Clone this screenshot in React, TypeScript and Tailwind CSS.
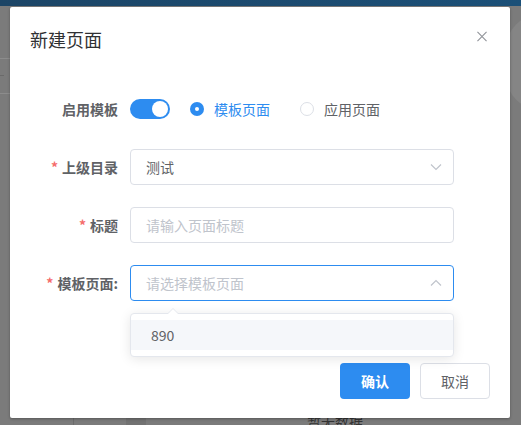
import React from "react";

const BLUE = "#2d8cf0";

function Chevron({ up }: { up?: boolean }) {
  return (
    <svg width="14" height="14" viewBox="0 0 14 14" fill="none">
      <polyline
        points={up ? "2,9.5 7,4.5 12,9.5" : "2,4.5 7,9.5 12,4.5"}
        stroke="#c0c4cc"
        strokeWidth="1.2"
        fill="none"
      />
    </svg>
  );
}

function Label({ text, required }: { text: string; required?: boolean }) {
  return (
    <div className="w-[100px] shrink-0 pr-3 text-right text-[14px] font-semibold text-[#606266]">
      {required && <span className="mr-1 text-[#f56c6c]">*</span>}
      {text}
    </div>
  );
}

export default function App() {
  return (
    <div
      className="relative h-[425px] w-[521px] overflow-hidden bg-[#7b7b7b]"
      style={{ fontFamily: '"Noto Sans CJK SC", "Noto Sans", sans-serif' }}
    >
      {/* page behind the mask */}
      <div className="h-[6px] w-full bg-gradient-to-r from-[#1c4566] to-[#1b5078]" />
      <div className="absolute left-0 top-[58px] h-px w-[10px] bg-[#8c8c8c]" />
      <div className="absolute left-0 top-[75px] h-px w-[4px] bg-[#6a6a6a]" />
      <div className="absolute left-0 top-[93px] h-px w-[10px] bg-[#8c8c8c]" />
      <div className="absolute left-[506px] top-[14px] h-[96px] w-[70px] rounded-full bg-[#858585]" />
      <div className="absolute left-[73px] top-[410px] h-[20px] w-px bg-[#6c6c6c]" />
      <div className="absolute left-[126px] top-[410px] h-[20px] w-[20px] bg-[#727272]" />
      <div className="absolute left-[307px] top-[411px] text-[14px] leading-[20px] text-[#333]">
        暂无数据
      </div>

      {/* dialog */}
      <div className="absolute left-[10px] top-[7px] h-[411px] w-[500px] rounded-[2px] bg-white shadow-[0_1px_3px_rgba(0,0,0,0.3)]">
        <div className="relative px-5 pt-5">
          <div className="text-[18px] leading-[24px] text-[#303133]">新建页面</div>
          <button className="absolute right-[23px] top-[24px] flex h-[10px] w-[10px] items-center justify-center">
            <svg width="11" height="11" viewBox="0 0 11 11">
              <path d="M0.5 0.5 L10.5 10.5 M10.5 0.5 L0.5 10.5" stroke="#909399" strokeWidth="1.2" />
            </svg>
          </button>
        </div>

        <div className="px-5 pt-[40px]">
          {/* row 1 */}
          <div className="flex h-9 items-center">
            <Label text="启用模板" />
            <div className="flex items-center">
              <div className="relative h-[20px] w-[40px] rounded-full" style={{ background: BLUE }}>
                <div className="absolute right-[2px] top-[2px] h-[16px] w-[16px] rounded-full bg-white" />
              </div>
              <div className="ml-5 flex items-center">
                <div
                  className="flex h-[14px] w-[14px] items-center justify-center rounded-full"
                  style={{ background: BLUE }}
                >
                  <div className="h-[4px] w-[4px] rounded-full bg-white" />
                </div>
                <span className="ml-[10px] text-[14px]" style={{ color: BLUE }}>
                  模板页面
                </span>
              </div>
              <div className="ml-[30px] flex items-center">
                <div className="h-[14px] w-[14px] rounded-full border border-[#dcdfe6] bg-white" />
                <span className="ml-[10px] text-[14px] text-[#606266]">应用页面</span>
              </div>
            </div>
          </div>

          {/* row 2 */}
          <div className="mt-[22px] flex h-9 items-center">
            <Label text="上级目录" required />
            <div className="flex h-9 w-[324px] items-center justify-between rounded border border-[#dcdfe6] pl-[15px] pr-[10px]">
              <span className="text-[14px] text-[#606266]">测试</span>
              <Chevron />
            </div>
          </div>

          {/* row 3 */}
          <div className="mt-[22px] flex h-9 items-center">
            <Label text="标题" required />
            <div className="flex h-9 w-[324px] items-center rounded border border-[#dcdfe6] pl-[15px]">
              <span className="text-[14px] text-[#c0c4cc]">请输入页面标题</span>
            </div>
          </div>

          {/* row 4 */}
          <div className="mt-[22px] flex h-9 items-center">
            <Label text="模板页面:" required />
            <div className="relative">
              <div
                className="flex h-9 w-[324px] items-center justify-between rounded border pl-[15px] pr-[10px]"
                style={{ borderColor: BLUE }}
              >
                <span className="text-[14px] text-[#c0c4cc]">请选择模板页面</span>
                <Chevron up />
              </div>
              <div className="absolute left-0 top-[48px] z-10 w-[324px] rounded border border-[#e4e7ed] bg-white py-[6px] shadow-[0_2px_12px_rgba(0,0,0,0.1)]">
                <div className="absolute left-[36px] top-[-6px] h-0 w-0 border-x-[6px] border-b-[6px] border-x-transparent border-b-[#e4e7ed]" />
                <div className="absolute left-[36px] top-[-5px] h-0 w-0 border-x-[6px] border-b-[6px] border-x-transparent border-b-white" />
                <div className="flex h-[30px] items-center bg-[#f5f7fa] pl-5 text-[14px] text-[#606266]">
                  890
                </div>
              </div>
            </div>
          </div>
        </div>

        {/* footer */}
        <div className="mt-[62px] flex justify-end gap-[10px] px-5">
          <button
            className="flex h-9 w-[70px] items-center justify-center rounded text-[14px] font-semibold text-white"
            style={{ background: BLUE }}
          >
            确认
          </button>
          <button className="flex h-9 w-[70px] items-center justify-center rounded border border-[#dcdfe6] bg-white text-[14px] text-[#606266]">
            取消
          </button>
        </div>
      </div>
    </div>
  );
}
